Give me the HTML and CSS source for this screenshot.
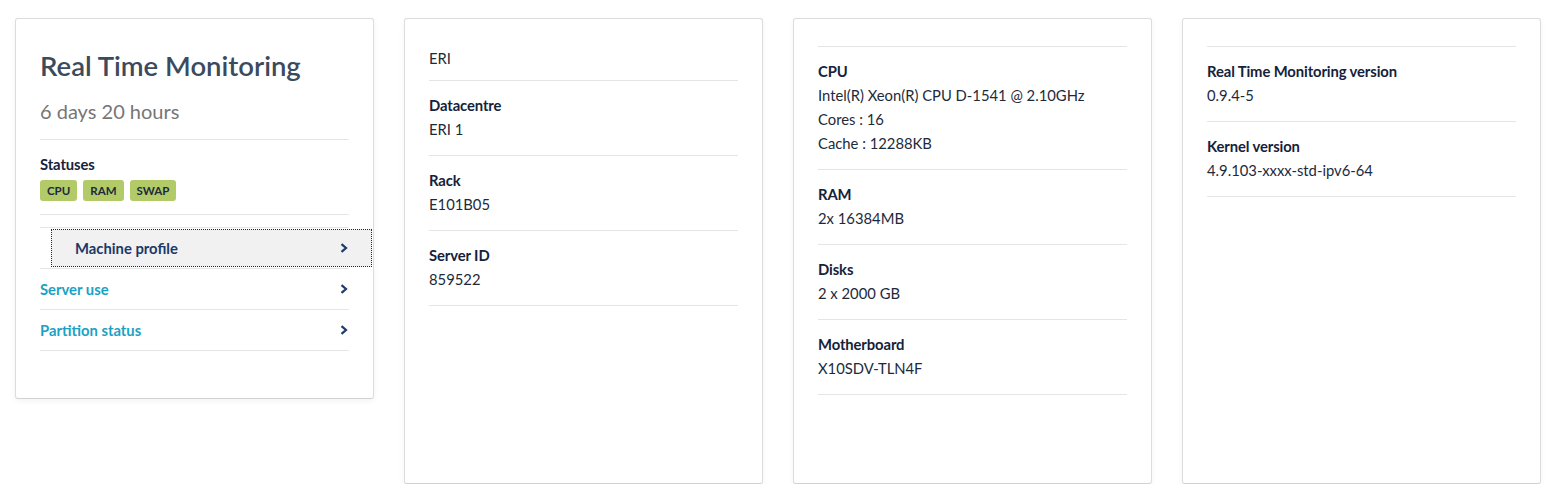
FILE: index.html
```html
<!DOCTYPE html>
<html lang="en">
<head>
<meta charset="utf-8">
<title>Real Time Monitoring</title>
<link rel="stylesheet" href="styles.css">
</head>
<body>
<main class="grid">
  <section class="card card--summary">
    <header class="summary-head">
      <h1 class="summary-title">Real Time Monitoring</h1>
      <p class="summary-uptime">6 days 20 hours</p>
    </header>
    <div class="section section--statuses">
      <div class="label">Statuses</div>
      <div class="badges">
        <span class="badge">CPU</span>
        <span class="badge">RAM</span>
        <span class="badge">SWAP</span>
      </div>
    </div>
    <ul class="nav">
      <li class="nav-item">
        <a class="nav-link nav-link--active" href="#">
          <span>Machine profile</span>
          <svg class="chev" width="8" height="10" viewBox="0 0 8 10"><path d="M1.5 1.2 L6 5 L1.5 8.8" fill="none" stroke="currentColor" stroke-width="2.2" stroke-linejoin="miter"/></svg>
        </a>
      </li>
      <li class="nav-item">
        <a class="nav-link" href="#">
          <span>Server use</span>
          <svg class="chev" width="8" height="10" viewBox="0 0 8 10"><path d="M1.5 1.2 L6 5 L1.5 8.8" fill="none" stroke="currentColor" stroke-width="2.2" stroke-linejoin="miter"/></svg>
        </a>
      </li>
      <li class="nav-item">
        <a class="nav-link" href="#">
          <span>Partition status</span>
          <svg class="chev" width="8" height="10" viewBox="0 0 8 10"><path d="M1.5 1.2 L6 5 L1.5 8.8" fill="none" stroke="currentColor" stroke-width="2.2" stroke-linejoin="miter"/></svg>
        </a>
      </li>
    </ul>
  </section>

  <section class="card card--tall">
    <div class="section section--first">
      <div class="value">ERI</div>
    </div>
    <div class="section">
      <div class="label">Datacentre</div>
      <div class="value">ERI 1</div>
    </div>
    <div class="section">
      <div class="label">Rack</div>
      <div class="value">E101B05</div>
    </div>
    <div class="section">
      <div class="label">Server ID</div>
      <div class="value">859522</div>
    </div>
  </section>

  <section class="card card--tall">
    <div class="section section--empty"></div>
    <div class="section">
      <div class="label">CPU</div>
      <div class="value">Intel(R) Xeon(R) CPU D-1541 @ 2.10GHz</div>
      <div class="value">Cores : 16</div>
      <div class="value">Cache : 12288KB</div>
    </div>
    <div class="section">
      <div class="label">RAM</div>
      <div class="value">2x 16384MB</div>
    </div>
    <div class="section">
      <div class="label">Disks</div>
      <div class="value">2 x 2000 GB</div>
    </div>
    <div class="section">
      <div class="label">Motherboard</div>
      <div class="value">X10SDV-TLN4F</div>
    </div>
  </section>

  <section class="card card--tall">
    <div class="section section--empty"></div>
    <div class="section">
      <div class="label">Real Time Monitoring version</div>
      <div class="value">0.9.4-5</div>
    </div>
    <div class="section">
      <div class="label">Kernel version</div>
      <div class="value">4.9.103-xxxx-std-ipv6-64</div>
    </div>
  </section>
</main>
</body>
</html>
```

FILE: styles.css
```css
* { box-sizing: border-box; }

body {
  margin: 0;
  background: #ffffff;
  font-family: Lato, "Liberation Sans", sans-serif;
  font-size: 14.8px;
  color: #1d2a3b;
}

.grid {
  display: grid;
  grid-template-columns: repeat(4, 359px);
  column-gap: 30px;
  align-items: start;
  padding: 18px 0 0 15px;
}

.card {
  background: #fff;
  border: 1px solid #dcdcdc;
  border-bottom-color: #d2d2d2;
  border-radius: 3px;
  box-shadow: 0 2px 6px rgba(0, 0, 0, 0.05);
  padding: 27px 24px 24px;
}

.card--tall {
  height: 466px;
}

.summary-head {
  border-bottom: 1px solid #e5e5e5;
  padding-bottom: 14px;
}

.summary-title {
  margin: 3px 0 0;
  font-size: 27.5px;
  line-height: 34px;
  font-weight: 600;
  color: #3b4a5d;
}

.summary-uptime {
  margin: 14px 0 0;
  font-size: 20px;
  line-height: 28px;
  color: #767676;
}

.section {
  border-bottom: 1px solid #e5e5e5;
  padding: 12px 0 14px;
}

.section--first {
  padding: 0 0 10px;
}

.section--empty {
  padding: 0;
}

.section--statuses {
  padding-bottom: 13px;
}

.label {
  font-weight: 700;
  line-height: 24px;
  color: #15223a;
  letter-spacing: -0.1px;
}

.value {
  line-height: 24px;
  color: #1d2a3b;
}

.badges {
  display: flex;
  gap: 6px;
  margin-top: 4px;
}

.badge {
  display: inline-block;
  height: 21px;
  line-height: 21px;
  padding: 0 7px;
  border-radius: 3px;
  background: #b2ca68;
  color: #1c2a3c;
  font-size: 11.5px;
  font-weight: 700;
}

.nav {
  list-style: none;
  margin: 12px 0 23px;
  padding: 0;
  border-top: 1px solid #e5e5e5;
}

.nav-item {
  border-bottom: 1px solid #e5e5e5;
  height: 41px;
  display: flex;
  align-items: stretch;
}

.nav-link {
  flex: 1;
  display: flex;
  align-items: center;
  justify-content: space-between;
  padding: 0 1px 0 0;
  font-weight: 700;
  color: #1aa1c4;
  text-decoration: none;
}

.nav-link--active {
  margin: 1px -23px 1px 11px;
  padding: 0 23px;
  background: #f1f1f1;
  border: 1px dotted #0d2a5e;
  color: #1b3868;
}

.chev {
  color: #1f3b6c;
  flex: none;
}
```
